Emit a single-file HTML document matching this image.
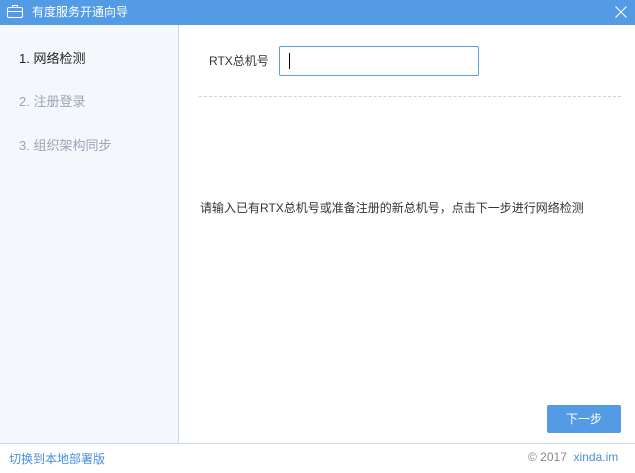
<!DOCTYPE html><html><head><meta charset="utf-8"><style>
body{margin:0;width:635px;height:472px;position:relative;overflow:hidden;background:#fff;font-family:"Liberation Sans","Noto Sans CJK SC",sans-serif;font-size:12px}
.t{position:absolute;left:0;top:0;width:635px;height:25px;background:#539be4;color:#fff;font-size:12px}
.side{position:absolute;left:0;top:25px;width:178px;height:418px;background:#f4f7fc;border-right:1px solid #c9d8ea}
.s{position:absolute;left:19px;font-size:13px;color:#9aa6b4}
.foot{position:absolute;left:0;top:443px;width:635px;height:29px;border-top:1px solid #c9d8ea}
</style></head><body>
<div class="t">
<svg style="position:absolute;left:7px;top:5px" width="16" height="13"><rect x="0.5" y="2.5" width="15" height="10" rx="1.5" fill="none" stroke="#fff"/><path d="M5.5 2.5V0.5h5v2M0.5 6.5h15" fill="none" stroke="#fff"/></svg>
<span style="position:absolute;left:32px;top:3px">有度服务开通向导</span>
<svg style="position:absolute;left:615px;top:6px" width="12" height="12"><path d="M0.5 0.5L11.5 11.5M11.5 0.5L0.5 11.5" stroke="#fff" stroke-width="1.1"/></svg>
</div>
<div class="side">
<div class="s" style="top:23px;color:#222">1. 网络检测</div>
<div class="s" style="top:66px">2. 注册登录</div>
<div class="s" style="top:110px">3. 组织架构同步</div>
</div>
<div style="position:absolute;left:209px;top:52px;color:#333">RTX总机号</div>
<div style="position:absolute;left:279px;top:46px;width:198px;height:28px;border:1px solid #5a9de0;border-radius:2px"><div style="position:absolute;left:9px;top:6px;width:1px;height:16px;background:#000"></div></div>
<div style="position:absolute;left:199px;top:96px;width:422px;border-top:1px dashed #c6d4e6"></div>
<div style="position:absolute;left:200px;top:199px;color:#333">请输入已有RTX总机号或准备注册的新总机号，点击下一步进行网络检测</div>
<div style="position:absolute;left:547px;top:405px;width:74px;height:28px;background:#539be4;border-radius:2px;color:#fff;text-align:center;line-height:28px">下一步</div>
<div class="foot">
<span style="position:absolute;left:9px;top:6px;color:#4a8fd8">切换到本地部署版</span>
<span style="position:absolute;left:528px;top:6px;color:#888">© 2017 <span style="color:#4a8fd8">&nbsp;xinda.im</span></span>
</div>
</body></html>
